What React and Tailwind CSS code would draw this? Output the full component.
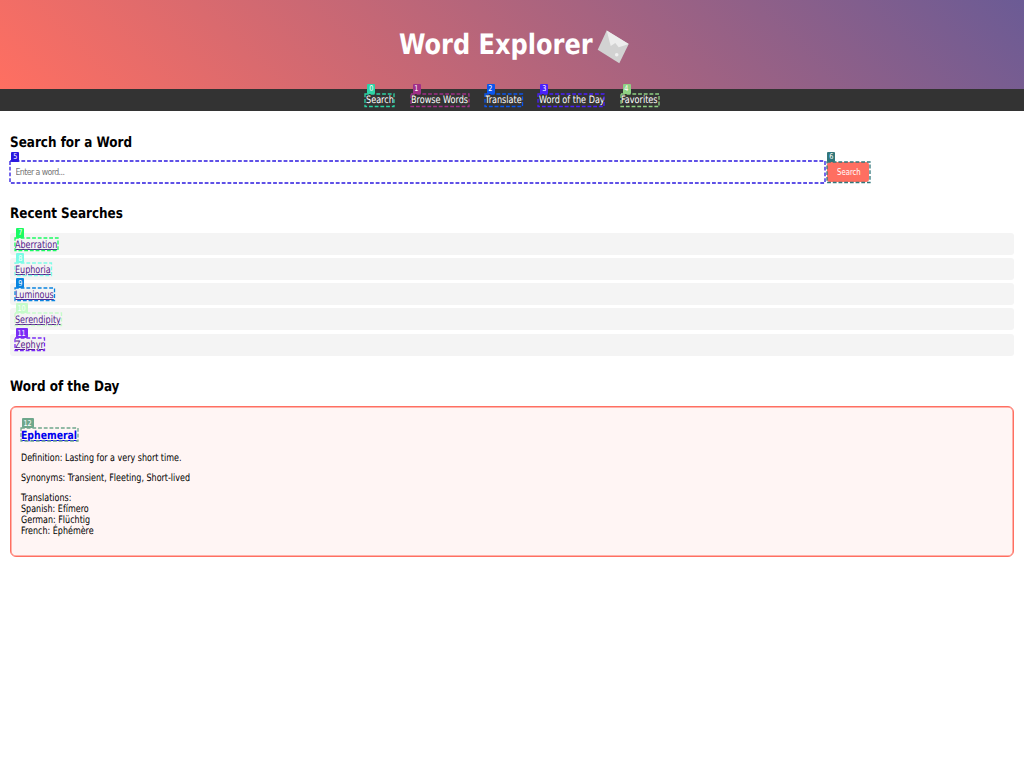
function Mark({ id, color, badge, children, className = "" }) {
  return (
    <span className={`relative inline-block whitespace-nowrap ${className}`} style={{ "--c": color }}>
      {children}
      <svg className="pointer-events-none absolute -top-[0.5px] -left-[0.5px] h-[calc(100%+1px)] w-[calc(100%+1px)] overflow-visible">
        <rect width="100%" height="100%" fill="none" stroke={color} strokeWidth="1.3" strokeDasharray="3.8 1.9" />
      </svg>
      <span className={`absolute flex h-[10px] items-center justify-center rounded-[1px] bg-(--c) pt-px text-[8px] leading-none font-normal text-white ${badge}`}>
        <span className="inline-block scale-x-90">{id}</span>
      </span>
    </span>
  );
}

const nav = [
  ["Search", "#2dd4a5", "w-[28px]"],
  ["Browse Words", "#a02f87", "w-[57px]"],
  ["Translate", "#0b55ee", "w-[36.5px]"],
  ["Word of the Day", "#4a20fb", "w-[65px]"],
  ["Favorites", "#8fd183", "w-[37px]"],
];

const recent = [
  ["Aberration", "#1bfb62", "w-[42px]", "w-[8px]"],
  ["Euphoria", "#7cfbe6", "w-[35.5px]", "w-[8px]"],
  ["Luminous", "#0a84e0", "w-[38.5px]", "w-[8px]"],
  ["Serendipity", "#c5fbc9", "w-[45.5px]", "w-[12px]"],
  ["Zephyr", "#7a2cf5", "w-[28.5px]", "w-[12px]"],
];

function Heading({ children, className = "" }) {
  return <h2 className={`h-[16px] origin-left scale-x-[0.92] pt-px text-[14.5px] leading-[17px] font-bold ${className}`}>{children}</h2>;
}

export default function App() {
  return (
    <div className="h-[768px] overflow-hidden bg-white font-['DejaVu_Sans_Condensed','DejaVu_Sans',sans-serif] [font-stretch:condensed] text-[10.2px] leading-[10.9px] text-black [text-rendering:geometricPrecision]">
      <header className="flex h-[89px] items-center justify-center gap-[5px] bg-[linear-gradient(45deg,#ff6f61,#6b5b95)] pl-[3px]">
        <h1 className="w-[193px] origin-left scale-x-[0.955] text-[28px] leading-[34px] font-bold whitespace-nowrap text-white">Word Explorer</h1>
        <svg className="mt-[5px] h-[34px] w-[32px]" viewBox="0 0 32 34">
          <path d="M9.7 .5 31.7 14 22.3 33.3.7 19.7Z" fill="#d2d2d2" />
          <path d="M9.7 .5 13.7 16 18.3 13 21.7 17.3 27.3 15.5 31.7 14Z" fill="#ededed" />
          <circle cx="19.7" cy="24.7" r="1.8" fill="#f0f0f0" />
        </svg>
      </header>
      <nav className="flex h-[22px] items-center justify-center gap-[17.2px] bg-[#333] text-white">
        {nav.map(([label, color, w], i) => (
          <Mark key={label} id={i} color={color} className={`h-[11.5px] ${w}`} badge="left-[1.5px] -top-[10.5px] w-[8px]">
            <a href="#" className="inline-block origin-left scale-x-[0.885] pt-[2.2px] align-top">{label}</a>
          </Mark>
        ))}
      </nav>
      <main className="px-[10px] pt-[23px]">
        <Heading>Search for a Word</Heading>
        <div className="mt-[11.5px] flex h-[21px] items-center gap-[3px]">
          <Mark id={5} color="#2b18e0" className="h-[21px] w-[814px]" badge="left-[1px] -top-[10px] w-[8px]">
            <input placeholder="Enter a word..." className="block h-[21px] w-full px-[5.5px] text-[8.7px] tracking-[-0.57px] placeholder:text-[#757575] outline-none" />
          </Mark>
          <Mark id={6} color="#32777b" className="h-[19.5px] w-[42px]" badge="left-0 -top-[10.5px] w-[8px]">
            <button className="flex h-[19.5px] w-full items-center justify-center rounded-[3px] bg-[#ff6f61] pl-px text-[9px] text-white">
              <span className="inline-block scale-x-[0.85]">Search</span>
            </button>
          </Mark>
        </div>
        <Heading className="mt-[22.5px]">Recent Searches</Heading>
        <ul className="mt-[12.2px] flex flex-col gap-[3.1px]">
          {recent.map(([label, color, w, badgeW], i) => (
            <li key={label} className="flex h-[22px] items-center rounded-[3px] bg-[#f4f4f4] px-[5px]">
              <Mark id={i + 7} color={color} className={`h-[11.5px] ${w}`} badge={`left-[1px] -top-[10.5px] ${badgeW}`}>
                <a href="#" className="inline-block origin-left scale-x-[0.877] pt-[2.3px] align-top text-[#551a8b] underline">{label}</a>
              </Mark>
            </li>
          ))}
        </ul>
        <Heading className="mt-[22.3px]">Word of the Day</Heading>
        <section className="mt-[12px] h-[151px] rounded-[6px] border border-[#ff6f61] bg-[#fff5f4] px-[10px] pt-[22px] shadow-[inset_0_0_0_0.5px_#ff6f61]">
          <h3 className="h-[12px] text-[11.2px] leading-[12px] font-bold">
            <Mark id={12} color="#6fa78c" className="h-[12px] w-[56px]" badge="left-[1px] -top-[10.5px] w-[12px]">
              <a href="#" className="inline-block origin-left scale-x-[0.925] pt-[1px] align-top text-[#0000ee] underline">Ephemeral</a>
            </Mark>
          </h3>
          <div className="origin-left scale-x-[0.873] pt-[13.2px]">
            <p>Definition: Lasting for a very short time.</p>
            <p className="mt-[9.1px]">Synonyms: Transient, Fleeting, Short-lived</p>
            <p className="mt-[9.1px]">Translations:<br />Spanish: Efímero<br />German: Flüchtig<br />French: Éphémère</p>
          </div>
        </section>
      </main>
    </div>
  );
}
